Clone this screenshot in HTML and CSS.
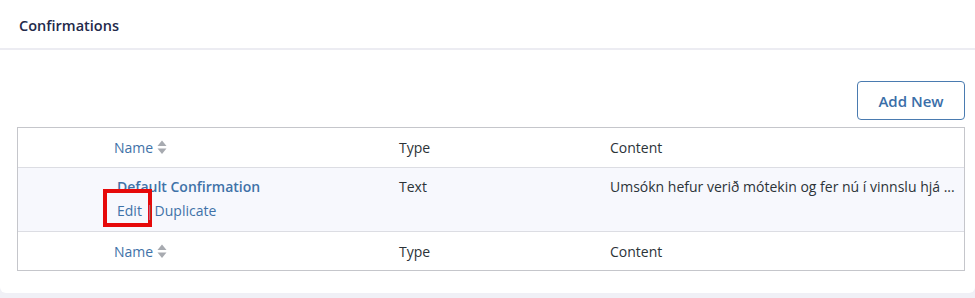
FILE: index.html
```html
<!DOCTYPE html>
<html>
<head>
<meta charset="utf-8">
<link rel="stylesheet" href="styles.css">
</head>
<body>
<div class="card">
  <div class="card-header"><h2 class="title">Confirmations</h2></div>
  <div class="card-body">
    <div class="toolbar"><button class="btn">Add New</button></div>
    <div class="table">
      <div class="row head">
        <div class="cell"><span class="sortable">Name <svg class="sort" width="10" height="15" viewBox="0 0 10 15"><path d="M5 0.5 L9.5 6 L0.5 6 Z" fill="#a7aab0"/><path d="M0.5 8.5 L9.5 8.5 L5 14 Z" fill="#a7aab0"/></svg></span></div>
        <div class="cell">Type</div>
        <div class="cell">Content</div>
      </div>
      <div class="row body">
        <div class="cell top">
          <div class="inner">
            <a class="strong">Default Confirmation</a>
            <div class="actions"><span class="edit-wrap"><a>Edit</a></span><span class="sep">|</span><a>Duplicate</a></div>
          </div>
        </div>
        <div class="cell top">Text</div>
        <div class="cell top">Umsókn hefur verið mótekin og fer nú í vinnslu hjá ...</div>
      </div>
      <div class="row foot">
        <div class="cell"><span class="sortable">Name <svg class="sort" width="10" height="15" viewBox="0 0 10 15"><path d="M5 0.5 L9.5 6 L0.5 6 Z" fill="#a7aab0"/><path d="M0.5 8.5 L9.5 8.5 L5 14 Z" fill="#a7aab0"/></svg></span></div>
        <div class="cell">Type</div>
        <div class="cell">Content</div>
      </div>
    </div>
  </div>
</div>
</body>
</html>
```
FILE: styles.css
```css
html, body { margin: 0; padding: 0; }
body {
  background: #f0f0f6;
  font-family: "Open Sans", "Noto Sans", sans-serif;
  font-size: 14px;
  color: #2c3338;
  height: 298px;
  overflow: hidden;
}
.card {
  background: #fff;
  height: 293px;
  border-radius: 0 0 6px 6px;
  box-sizing: border-box;
}
.card-header {
  height: 50px;
  border-bottom: 2px solid #ececf2;
  box-sizing: border-box;
  display: flex;
  align-items: center;
  padding: 0 19px;
}
.title {
  margin: 0;
  font-size: 14.5px;
  font-weight: 600;
  color: #23294a;
  position: relative;
  top: 1px;
}
.card-body {
  padding: 31px 10px 0 17px;
}
.toolbar {
  display: flex;
  justify-content: flex-end;
  margin-bottom: 7px;
}
.btn {
  width: 108px;
  height: 39px;
  border: 1px solid #4a7bb0;
  border-radius: 4px;
  background: #fff;
  color: #3a6ea8;
  font-family: inherit;
  font-size: 15px;
  font-weight: 600;
  padding: 0;
}
.table {
  border: 1px solid #c5c6cb;
}
.row {
  display: grid;
  grid-template-columns: 285px 211px 1fr;
  padding-left: 96px;
}
.row.head { height: 39px; border-bottom: 1px solid #dcdde3; }
.row.body { height: 63px; background: #f7f8fd; border-bottom: 1px solid #dcdde3; }
.row.foot { height: 38px; }
.cell { display: flex; align-items: center; white-space: nowrap; }
.cell.top { align-items: flex-start; padding-top: 9px; }
.sortable { color: #3f72a8; display: inline-flex; align-items: center; gap: 4px; }
.sort { display: block; }
.inner { padding-left: 3px; }
.strong { color: #3f72a8; font-weight: 600; display: block; line-height: 20px; }
.actions { color: #3f72a8; line-height: 20px; margin-top: 4px; display: flex; align-items: center; }
.actions a { color: #3f72a8; }
.edit-wrap { position: relative; }
.edit-wrap::after {
  content: "";
  position: absolute;
  left: -14px;
  top: -12px;
  width: 41px;
  height: 30px;
  border: 4px solid #e60a0a;
}
.sep { color: #8c8f94; margin: 0 1px 0 4px; position: relative; z-index: 1; }
```
